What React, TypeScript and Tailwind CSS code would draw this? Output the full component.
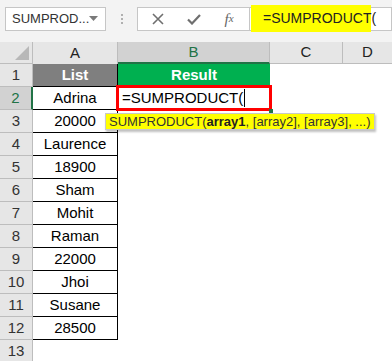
import React from "react";

const rows: { n: number; a: string }[] = [
  { n: 1, a: "List" },
  { n: 2, a: "Adrina" },
  { n: 3, a: "20000" },
  { n: 4, a: "Laurence" },
  { n: 5, a: "18900" },
  { n: 6, a: "Sham" },
  { n: 7, a: "Mohit" },
  { n: 8, a: "Raman" },
  { n: 9, a: "22000" },
  { n: 10, a: "Jhoi" },
  { n: 11, a: "Susane" },
  { n: 12, a: "28500" },
  { n: 13, a: "" },
];

export default function App() {
  return (
    <div
      className="w-[392px] h-[361px] overflow-hidden bg-white relative"
      style={{ fontFamily: '"Liberation Sans", Arial, sans-serif' }}
    >
      {/* toolbar */}
      <div className="h-[42px] bg-[#f3f3f3] flex items-start pt-[7px]">
        <div className="ml-[5px] w-[101px] h-[24px] bg-white border border-[#c6c6c6] flex items-center pl-[6px] pr-[7px] text-[13px] text-[#333]">
          <span className="flex-1 whitespace-nowrap">SUMPROD...</span>
          <svg width="9" height="6" viewBox="0 0 9 6" className="shrink-0">
            <path d="M0 0 L9 0 L4.5 5 Z" fill="#7a7a7a" />
          </svg>
        </div>
        <div className="w-[31px] h-[24px] flex flex-col items-center justify-center gap-[2px]">
          <div className="w-[2px] h-[2px] bg-[#b0b0b0]" />
          <div className="w-[2px] h-[2px] bg-[#b0b0b0]" />
          <div className="w-[2px] h-[2px] bg-[#b0b0b0]" />
        </div>
        <div className="w-[113px] h-[24px] bg-white border border-[#c6c6c6] flex items-center">
          <div className="w-[40px] flex justify-center">
            <svg width="12" height="12" viewBox="0 0 12 12">
              <path d="M1 1 L11 11 M11 1 L1 11" stroke="#6f6f6f" strokeWidth="1.6" />
            </svg>
          </div>
          <div className="w-[32px] flex justify-center">
            <svg width="14" height="11" viewBox="0 0 14 11">
              <path d="M1 5.5 L5 9.5 L13 1" stroke="#6f6f6f" strokeWidth="2.2" fill="none" />
            </svg>
          </div>
          <div
            className="w-[38px] flex justify-center text-[#666] italic text-[15px]"
            style={{ fontFamily: '"Liberation Serif", "Times New Roman", serif' }}
          >
            f<span className="text-[11px] relative top-[2px]">x</span>
          </div>
        </div>
        <div className="flex-1 h-[24px] bg-white border border-[#c6c6c6] border-l-0 relative">
          <div className="absolute left-[1px] top-[-3px] w-[120px] h-[27px] bg-[#ffff00] flex items-center pl-[12px] text-[14px] text-[#222]">
            =SUMPRODUCT(
          </div>
        </div>
      </div>

      {/* grid */}
      <div className="grid grid-cols-[33px_85px_152px_73px_49px] grid-rows-[22px_repeat(13,23px)] text-[15px]">
        {/* header row */}
        <div className="bg-[#e6e6e6] border-r border-b border-[#bdbdbd] relative flex items-end justify-end pr-[3px] pb-[3px]">
          <svg width="14" height="14" viewBox="0 0 14 14">
            <path d="M14 0 L14 14 L0 14 Z" fill="#b8b8b8" />
          </svg>
        </div>
        <div className="bg-[#e6e6e6] border-r border-[#bdbdbd] flex items-center justify-center text-[#222] text-[15px]">
          A
        </div>
        <div className="bg-[#d2d2d2] border-r border-b-2 border-r-[#bdbdbd] border-b-[#217346] flex items-center justify-center text-[#217346] text-[15px]">
          B
        </div>
        <div className="bg-[#e6e6e6] border-r border-b border-[#bdbdbd] flex items-center justify-center text-[#222] text-[15px]">
          C
        </div>
        <div className="bg-[#e6e6e6] border-b border-[#bdbdbd] flex items-center justify-center text-[#222] text-[15px]">
          D
        </div>

        {rows.map((r) => {
          const isHdr = r.n === 1;
          const active = r.n === 2;
          const inTable = r.n <= 12;
          return (
            <React.Fragment key={r.n}>
              <div
                className={
                  active
                    ? "bg-[#d2d2d2] border-r-2 border-b border-r-[#217346] border-b-[#bdbdbd] flex items-center justify-center text-[#217346] text-[15px]"
                    : "bg-[#e6e6e6] border-r border-b border-[#bdbdbd] flex items-center justify-center text-[#333] text-[15px]"
                }
              >
                {r.n}
              </div>
              {isHdr ? (
                <div className="bg-[#7f7f7f] border-r border-b border-black flex items-center justify-center text-white font-bold">
                  List
                </div>
              ) : inTable ? (
                <div className="bg-white border-r border-b border-black flex items-center justify-center text-black">
                  {r.a}
                </div>
              ) : (
                <div className="bg-white" />
              )}
              {isHdr ? (
                <div className="bg-[#00b050] flex items-center justify-center text-white font-bold">
                  Result
                </div>
              ) : active ? (
                <div className="relative">
                  <div className="absolute left-[-2px] top-[-2px] right-[-2px] bottom-[-1px] border-[3px] border-[#ff0000] flex items-center pl-[3px] text-black">
                    =SUMPRODUCT(
                    <span className="inline-block w-[1px] h-[18px] bg-black ml-[1px]" />
                  </div>
                  <div className="absolute right-[-3px] bottom-[-3px] w-[4px] h-[4px] bg-[#217346]" />
                </div>
              ) : (
                <div className="bg-white" />
              )}
              <div className="bg-white" />
              <div className="bg-white" />
            </React.Fragment>
          );
        })}
      </div>

      {/* tooltip */}
      <div className="absolute left-[105px] top-[113px] h-[17px] bg-[#ffff00] border border-[#c8c8c8] shadow-[1px_2px_2px_rgba(0,0,0,0.25)] flex items-center px-[3px] text-[13px] text-[#333] whitespace-nowrap">
        SUMPRODUCT(<b className="text-[#222]">array1</b>, [array2], [array3], ...)
      </div>
    </div>
  );
}
